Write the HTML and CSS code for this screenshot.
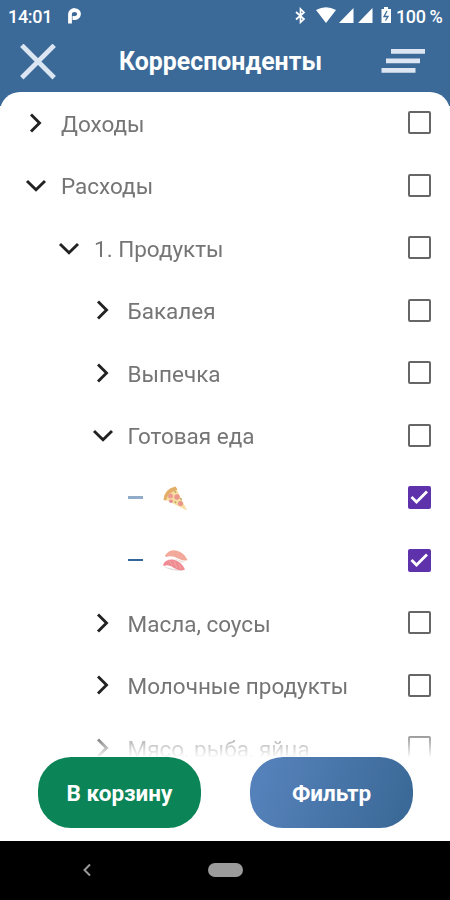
FILE: index.html
```html
<!DOCTYPE html>
<html lang="ru">
<head>
<meta charset="utf-8">
<title>Корреспонденты</title>
<link rel="stylesheet" href="styles.css">
</head>
<body>
<svg class="defs" width="0" height="0">
  <symbol id="right" viewBox="0 0 22 22"><path d="M6 2.500L14.500 11L6 19.500" fill="none" stroke="currentColor" stroke-width="2.900"/></symbol>
  <symbol id="down" viewBox="0 0 22 22"><path d="M2 7L11 15.800L20 7" fill="none" stroke="currentColor" stroke-width="2.900"/></symbol>
</svg>
<div class="screen">
  <div class="status">
    <span class="clock">14:01</span>
    <svg class="parking" width="14" height="18" viewBox="0 0 14 18"><path d="M3 16.500V7A4.500 4 0 1 1 7 11H5.500" fill="none" stroke="#fff" stroke-width="3.800"/></svg>
    <svg class="signals" width="98" height="18" viewBox="0 0 98 18">
      <path d="M2 5L10 12L6.500 15.300V2L10 5.500L2 12.500" fill="none" stroke="#fff" stroke-width="1.700"/>
      <path d="M22 3Q32 -2.500 42 3L32 16Z" fill="#fff"/>
      <path d="M45 16L59.500 1V16ZM64 16L78.500 1V16Z" fill="#fff"/>
      <path d="M87.500 2H90V0H94V2H97V16H87.500Z" fill="#fff"/>
      <path d="M93 4L90 9.500H94L91.500 13.500" fill="none" stroke="#3c6a98" stroke-width="1.300"/>
    </svg>
    <span class="charge">100 %</span>
  </div>
  <header class="header">
    <svg class="close" width="36" height="36" viewBox="0 0 36 36"><path d="M1.800 1.300L34.200 33.700M34.200 1.300L1.800 33.700" stroke="#dbe6f2" stroke-width="4.800"/></svg>
    <h1 class="title">Корреспонденты</h1>
    <svg class="menu" width="44" height="26" viewBox="0 0 44 26"><path d="M10 0H44V4.700H10ZM5 9.500H39V14.200H5ZM.5 19H34.500V23.700H.5Z" fill="#dbe6f2"/></svg>
  </header>
  <main class="sheet">
    <ul class="tree">
      <li class="row"><svg class="arrow"><use href="#right"/></svg><span class="label">Доходы</span><i class="box"></i></li>
      <li class="row"><svg class="arrow"><use href="#down"/></svg><span class="label">Расходы</span><i class="box"></i></li>
      <li class="row level2"><svg class="arrow"><use href="#down"/></svg><span class="label">1. Продукты</span><i class="box"></i></li>
      <li class="row level3"><svg class="arrow"><use href="#right"/></svg><span class="label">Бакалея</span><i class="box"></i></li>
      <li class="row level3"><svg class="arrow"><use href="#right"/></svg><span class="label">Выпечка</span><i class="box"></i></li>
      <li class="row level3"><svg class="arrow"><use href="#down"/></svg><span class="label">Готовая еда</span><i class="box"></i></li>
      <li class="row level4"><i class="dash pale"></i>
        <svg class="food" width="26" height="26" viewBox="0 0 26 26">
          <path d="M2 14L14 3L25 25.500Z" fill="#f8dda0"/>
          <path d="M1.500 15Q2 4 13.500 1.500L15.500 4.500Q6.500 7 4 15.500Z" fill="#e3ae68"/>
          <circle cx="8.500" cy="11" r="2.500" fill="#ed9c94"/><circle cx="15" cy="12" r="2.700" fill="#ea958e"/><circle cx="9" cy="16.300" r="1.800" fill="#e58c94"/><circle cx="18.500" cy="18.500" r="2.500" fill="#ea958e"/>
          <path d="M12.500 6L14 7.500M13 16.500L14 18M18.500 13L19.500 15" stroke="#b5ab64" stroke-width="1.400"/>
        </svg>
        <i class="box checked"><svg width="22" height="22" viewBox="0 0 22 22"><path d="M3.500 11L8.500 16L19 5.500" fill="none" stroke="#fff" stroke-width="2.800"/></svg></i></li>
      <li class="row level4"><i class="dash"></i>
        <svg class="food" width="26" height="26" viewBox="0 0 26 26">
          <path d="M2 19Q8 22 21 23Q12 25 4 21Z" fill="#e2dedc"/>
          <path d="M10 11Q20 14 23 14L20 16Z" fill="#eee5df"/>
          <path d="M3 8.500Q7 2.500 14 3.500Q22 5 25.500 13Q22 14.500 16 11.500Q10 8 4 10Z" fill="#f2a99a"/>
          <path d="M1 18Q3 12 11 12.500Q19 14 23 22.500Q18 25 12 21Q7 17 2 19Z" fill="#ee8b93"/>
          <path d="M9 5L12 8M14 5L17 10M19 7L21 12M7 13.500L10 18M12 14L15 21M17 17L19 22" stroke="#f3aca5" stroke-width=".8"/>
        </svg>
        <i class="box checked"><svg width="22" height="22" viewBox="0 0 22 22"><path d="M3.500 11L8.500 16L19 5.500" fill="none" stroke="#fff" stroke-width="2.800"/></svg></i></li>
      <li class="row level3"><svg class="arrow"><use href="#right"/></svg><span class="label">Масла, соусы</span><i class="box"></i></li>
      <li class="row level3"><svg class="arrow"><use href="#right"/></svg><span class="label">Молочные продукты</span><i class="box"></i></li>
      <li class="row level3"><svg class="arrow"><use href="#right"/></svg><span class="label">Мясо, рыба, яйца</span><i class="box"></i></li>
    </ul>
    <div class="actions"><button class="btn cart">В корзину</button><button class="btn filter">Фильтр</button></div>
  </main>
  <nav class="nav">
    <svg class="back" width="10" height="14" viewBox="0 0 10 14"><path d="M8 1.500L2.500 7L8 12.500" fill="none" stroke="#999" stroke-width="2"/></svg>
    <i class="home"></i>
  </nav>
</div>
</body>
</html>
```
FILE: styles.css
```css
* { box-sizing: border-box; }
body { margin: 0; font-family: Roboto, sans-serif; }
.defs { display: block; }
.screen {
  width: 450px;
  height: 900px;
  display: flex;
  flex-direction: column;
  overflow: hidden;
  background: linear-gradient(#3c6a98 106px, #fff 106px);
}
.status {
  flex: none;
  height: 32px;
  padding: 0 7px 0 8px;
  display: flex;
  align-items: center;
  color: #fff;
  font-size: 18px;
  font-weight: 500;
}
.clock { width: 59px; letter-spacing: -.3px; }
.signals { margin-left: auto; }
.charge { margin-left: 4px; letter-spacing: -.4px; width: 47px; white-space: nowrap; }
.header {
  flex: none;
  height: 59.500px;
  padding: 0 25px 0 20px;
  display: flex;
  align-items: center;
  justify-content: space-between;
}
.title { margin: 0; padding: 1px 0 0 4px; color: #fff; font-size: 24.900px; font-weight: 700; line-height: 30px; }
.sheet {
  flex: 1;
  min-height: 0;
  display: flex;
  flex-direction: column;
  background: #fff;
  border-radius: 20px 20px 0 0;
}
.tree {
  flex: none;
  height: 665.500px;
  margin: 0;
  padding: 0;
  list-style: none;
  overflow: hidden;
  mask-image: linear-gradient(#000 632px, transparent 666px);
}
.row { height: 62.500px; padding: 0 19px 0 25px; display: flex; align-items: center; }
.level2 { padding-left: 58px; }
.level3 { padding-left: 91.500px; }
.level4 { padding-left: 128px; }
.arrow { flex: none; width: 22px; height: 22px; margin-right: 14px; color: #222; }
.label { color: #757575; font-size: 22.500px; letter-spacing: 0; white-space: nowrap; padding-top: 2px; }
.box { width: 23px; height: 23px; margin-left: auto; border: 2px solid #666; border-radius: 2px; }
.checked { background: #5d32aa; border: 0; }
.checked svg { display: block; }
.dash { width: 15px; height: 2px; background: #33679c; }
.pale { height: 3px; background: #91acc9; }
.food { margin-left: 19px; }
.actions { flex: none; height: 71px; padding: 0 37px 0 38px; display: flex; justify-content: space-between; }
.btn {
  width: 163px;
  height: 71px;
  padding: 0;
  border: 0;
  border-radius: 33px;
  color: #fff;
  font: 700 22.500px Roboto, sans-serif;
}
.cart { background: #0b8457; }
.filter { background: linear-gradient(110deg, #5581ba 10%, #3c6a98 90%); }
.nav {
  flex: none;
  height: 59.500px;
  display: grid;
  grid-template-columns: 82px 126px 1fr;
  align-items: center;
  background: #000;
}
.back { grid-column: 2; }
.home { grid-column: 3; width: 35px; height: 14px; border-radius: 7px; background: #9b9b9b; }
```
